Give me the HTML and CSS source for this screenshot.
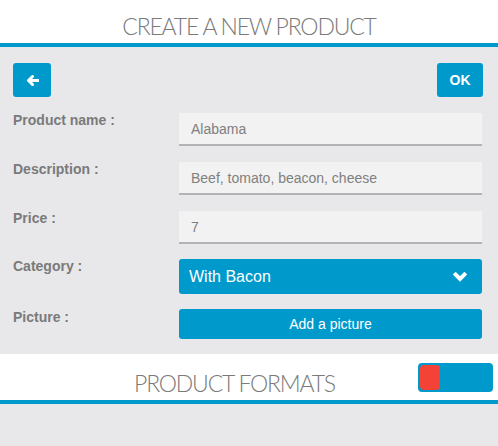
FILE: index.html
```html
<!DOCTYPE html>
<html>
<head>
    <title>Create a new product</title>
    <meta charset="utf-8" />
    <link rel="stylesheet" href="styles.css">
</head>
<body>
    <div class="section-head">
        <h1 class="section-title">CREATE A NEW PRODUCT</h1>
    </div>

    <div class="form">
        <div class="toolbar">
            <button class="btn btn-back" type="button">
                <svg width="13" height="11" viewBox="0 0 13 11">
                    <path d="M12 5.5H3 M6.5 1.5L2.5 5.5L6.5 9.5" fill="none" stroke="#fff" stroke-width="3" stroke-linejoin="round" stroke-linecap="round"/>
                </svg>
            </button>
            <button class="btn btn-ok" type="button">OK</button>
        </div>

        <div class="row">
            <label class="label">Product name :</label>
            <input class="field" type="text" value="Alabama" />
        </div>
        <div class="row">
            <label class="label">Description :</label>
            <input class="field" type="text" value="Beef, tomato, beacon, cheese" />
        </div>
        <div class="row">
            <label class="label">Price :</label>
            <input class="field" type="text" value="7" />
        </div>
        <div class="row row-select">
            <label class="label">Category :</label>
            <div class="select">
                <span>With Bacon</span>
                <svg width="16" height="11" viewBox="0 0 16 11">
                    <path d="M2.2 2.2L8 8L13.8 2.2" fill="none" stroke="#fff" stroke-width="4" stroke-linejoin="miter"/>
                </svg>
            </div>
        </div>
        <div class="row">
            <label class="label">Picture :</label>
            <button class="btn btn-picture" type="button">Add a picture</button>
        </div>
    </div>

    <div class="section-head section-head-formats">
        <h2 class="section-title formats-title">PRODUCT FORMATS</h2>
        <div class="toggle"><span class="knob"></span></div>
    </div>
</body>
</html>
```

FILE: styles.css
```css
body {
    margin: 0;
    background: #e8e8ea;
    font-family: "Liberation Sans", Arial, sans-serif;
    height: 446px;
}

.section-head {
    background: white;
    border-bottom: 4px solid #0099cc;
    height: 43px;
    display: flex;
    align-items: center;
}
.section-title {
    margin: 0;
    flex: 1;
    text-align: center;
    font-family: Lato, "Open Sans", sans-serif;
    font-weight: 300;
    font-size: 23px;
    letter-spacing: -1.2px;
    line-height: 30px;
    padding-top: 9px;
    color: #7a7a7a;
}

.form {
    padding: 16px 16px 15px 13px;
    display: flex;
    flex-direction: column;
    gap: 16px;
}
.toolbar {
    display: flex;
    justify-content: space-between;
}
.btn {
    border: none;
    background: #0099cc;
    color: white;
    border-radius: 3px;
    font-family: "Liberation Sans", Arial, sans-serif;
    cursor: pointer;
}
.btn-back {
    width: 38px;
    height: 34px;
    display: flex;
    align-items: center;
    justify-content: center;
    padding: 0;
}
.btn-ok {
    width: 46px;
    height: 34px;
    font-weight: bold;
    font-size: 14px;
    padding: 0;
    margin-right: -1px;
}

.row {
    display: grid;
    grid-template-columns: 166px 1fr;
    align-items: start;
}
.row-select {
    margin-top: -1px;
}
.label {
    font-weight: bold;
    font-size: 14px;
    line-height: 14px;
    color: #7a7a7a;
}
.field {
    height: 33px;
    box-sizing: border-box;
    border: none;
    border-bottom: 2px solid #b3b3b3;
    background: #f2f2f2;
    padding: 0 12px;
    font-family: "Liberation Sans", Arial, sans-serif;
    font-size: 14px;
    color: #808080;
    outline: none;
}
.select {
    height: 35px;
    background: #0099cc;
    border-radius: 3px;
    color: white;
    font-size: 16px;
    display: flex;
    align-items: center;
    justify-content: space-between;
    padding: 0 14px 0 10px;
}
.btn-picture {
    height: 30px;
    font-size: 14px;
    margin-top: -1px;
}

.section-head-formats {
    height: 46px;
}
.formats-title {
    padding-left: 51px;
    padding-top: 11px;
}
.toggle {
    width: 75px;
    height: 29px;
    box-sizing: border-box;
    margin-right: 5px;
    background: #0099cc;
    border-radius: 4px;
    padding: 2px;
    display: flex;
}
.knob {
    width: 20px;
    height: 25px;
    background: #f44336;
    border-radius: 4px;
}
```
